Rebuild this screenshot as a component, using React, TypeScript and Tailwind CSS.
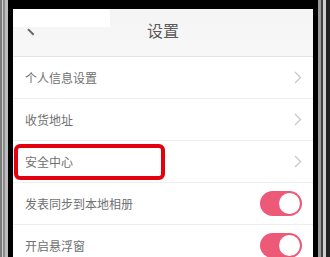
import React from "react";

const font = { fontFamily: '"Noto Sans CJK SC", "Noto Sans", sans-serif' };

function Chevron() {
  return (
    <svg width="8" height="13" viewBox="0 0 8 13" className="shrink-0">
      <path d="M1 1l5.5 5.5L1 12" fill="none" stroke="#c8c8c8" strokeWidth="1.3" />
    </svg>
  );
}

function Toggle() {
  return (
    <div className="flex h-[25px] w-[42px] shrink-0 items-center justify-end rounded-full bg-[#ec5a78] pr-[2px]">
      <div className="h-[21px] w-[21px] rounded-full bg-white" />
    </div>
  );
}

type Row = { label: string; kind: "link" | "toggle"; marked?: boolean };

const rows: Row[] = [
  { label: "个人信息设置", kind: "link" },
  { label: "收货地址", kind: "link" },
  { label: "安全中心", kind: "link", marked: true },
  { label: "发表同步到本地相册", kind: "toggle" },
  { label: "开启悬浮窗", kind: "toggle" },
];

export default function App() {
  return (
    <div className="flex h-[257px] w-[330px] overflow-hidden bg-black" style={font}>
      {/* left bezel */}
      <div className="flex h-full w-[13px] shrink-0">
        <div className="w-[2px] bg-[#7a7a7a]" />
        <div className="w-[1px] bg-[#d0d0d0]" />
        <div className="w-[2px] bg-[#8a8a8a]" />
        <div className="w-[3px] bg-[#bdbdbd]" />
        <div className="w-[5px] bg-black" />
      </div>

      <div className="flex w-[300px] shrink-0 flex-col">
        <div className="h-[9px] shrink-0 bg-black" />
        <div className="flex flex-1 flex-col bg-white">
          {/* header */}
          <div className="relative h-[48px] shrink-0 border-b border-[#e4e4e4] bg-gradient-to-b from-[#f4f4f4] to-[#f8f8f8]">
            <div className="absolute left-0 top-0 h-[18px] w-[97px] bg-white" />
            <div className="relative flex h-[39px] items-center justify-center text-[16px] text-[#5a5a5a]">
              <span className="absolute left-[14px] top-[22px] h-[1.5px] w-[8px] rotate-45 bg-[#666]" />
              <span className="pt-[2px]">设置</span>
            </div>
          </div>

          {rows.map((r) => (
            <div
              key={r.label}
              className="relative flex h-[42px] shrink-0 items-center justify-between border-b border-[#eeeeee] pl-[12px] pr-[11px]"
            >
              <span className="text-[12px] text-[#707070]">{r.label}</span>
              {r.kind === "link" ? <Chevron /> : <Toggle />}
              {r.marked && (
                <div className="absolute left-[1px] top-[3px] h-[36px] w-[151px] rounded-[6px] border-[4px] border-[#e3000f]" />
              )}
            </div>
          ))}
        </div>
      </div>

      {/* right bezel */}
      <div className="flex h-full w-[17px] shrink-0">
        <div className="w-[5px] bg-black" />
        <div className="w-[3px] bg-[#9a9a9a]" />
        <div className="w-[2px] bg-[#444]" />
        <div className="w-[3px] bg-[#cfcfcf]" />
        <div className="w-[4px] bg-[#222]" />
      </div>
    </div>
  );
}
